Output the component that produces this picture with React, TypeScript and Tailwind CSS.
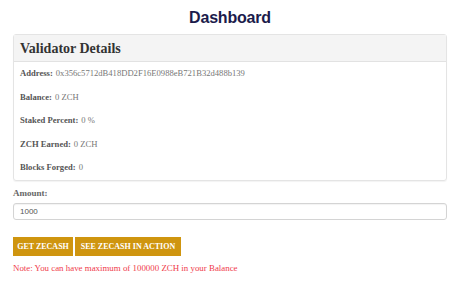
export default function App() {
  const rows = [
    { label: 'Address:', value: '0x356c5712dB418DD2F16E0988eB721B32d488b139' },
    { label: 'Balance:', value: '0 ZCH' },
    { label: 'Staked Percent:', value: '0 %' },
    { label: 'ZCH Earned:', value: '0 ZCH' },
    { label: 'Blocks Forged:', value: '0' },
  ]

  return (
    <div className="w-[460px] h-[295px] bg-white px-[13px] font-['Liberation_Serif',serif]">
      {/* Title */}
      <h1 className="pt-[8px] h-[34px] text-center text-[16px] leading-[20px] font-bold text-[#1b1b4b] font-['Liberation_Sans',sans-serif] tracking-[-0.2px]">
        Dashboard
      </h1>

      {/* Panel */}
      <div className="border border-[#e4e4e4] rounded-[3px] shadow-[0_1px_1px_rgba(0,0,0,0.05)]">
        <div className="h-[27px] bg-[#f4f4f4] border-b border-[#e2e2e2] px-[6px] flex items-center">
          <span className="text-[14px] font-bold text-[#333]">Validator Details</span>
        </div>
        <div className="px-[6px] flex flex-col">
          {rows.map((r) => (
            <div key={r.label} className="h-[23.5px] flex items-center text-[8.6px] text-[#777]">
              <span className="font-bold text-[#555] mr-[3px]">{r.label}</span>
              <span>{r.value}</span>
            </div>
          ))}
        </div>
      </div>

      {/* Amount */}
      <div className="mt-[6px] text-[9px] font-bold text-[#666]">Amount:</div>
      <div className="mt-[3px] h-[17px] border border-[#d4d4d4] rounded-[3px] flex items-center px-[6px] text-[8px] text-[#555] font-['Liberation_Sans',sans-serif] shadow-[inset_0_1px_1px_rgba(0,0,0,0.05)]">
        1000
      </div>

      {/* Buttons */}
      <div className="mt-[17px] flex gap-[2px]">
        <button className="h-[19px] w-[60px] bg-[#cf950f] text-white text-[8px] font-bold">GET ZECASH</button>
        <button className="h-[19px] w-[106px] bg-[#cf950f] text-white text-[8px] font-bold">SEE ZECASH IN ACTION</button>
      </div>

      <p className="mt-[6px] text-[8.9px] text-[#f03c4c]">
        Note: You can have maximum of 100000 ZCH in your Balance
      </p>
    </div>
  )
}
